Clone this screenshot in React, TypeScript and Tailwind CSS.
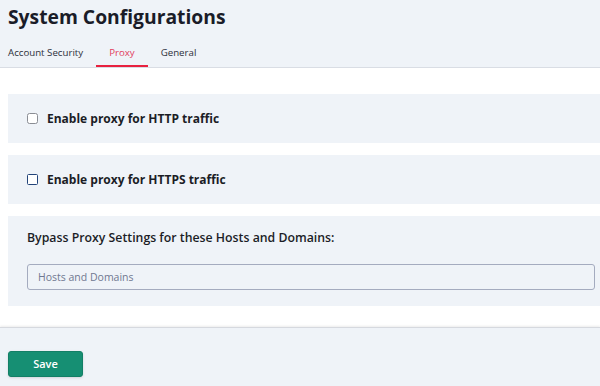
import { useState } from 'react';

const tabs = ['Account Security', 'Proxy', 'General'];

const ProxyCheck = ({ label, accent }: { label: string; accent?: boolean }) => {
  const [checked, setChecked] = useState(false);
  return (
    <div className="flex h-[49px] items-center bg-[#eff3f8] pl-[19px] pr-[5px]">
      <label className="flex cursor-pointer items-center gap-[9px]">
        <input
          type="checkbox"
          checked={checked}
          onChange={() => setChecked(!checked)}
          className={`h-[11px] w-[11px] appearance-none border bg-white ${
            accent ? 'rounded-[1.5px] border-[#23447a]' : 'rounded-[2.5px] border-[#8a8d94]'
          }`}
        />
        <span className="text-[12px] font-bold leading-[18px] text-[#1b1d26]">{label}</span>
      </label>
    </div>
  );
};

export default function App() {
  const [active, setActive] = useState('Proxy');

  return (
    <div className="flex h-[386px] w-[600px] flex-col overflow-hidden bg-white font-['Open_Sans',sans-serif]">
      {/* header */}
      <div className="h-[68px] shrink-0 border-b border-[#d9dde4] bg-[#eff3f8]">
        <h1 className="pl-2 pt-[3px] text-[19.3px] font-bold leading-[27px] text-[#1a1c28]">System Configurations</h1>
        <div className="-ml-[5px] mt-[15px] flex">
          {tabs.map((t) => (
            <button
              key={t}
              onClick={() => setActive(t)}
              className={`border-b-2 px-[13px] pb-[5px] text-[9.7px] leading-[15px] ${
                active === t ? 'border-[#e8213f] text-[#e23b5c]' : 'border-transparent text-[#2c2f3a]'
              }`}
            >
              {t}
            </button>
          ))}
        </div>
      </div>

      {/* content */}
      <div className="flex flex-1 flex-col gap-3 pb-[21px] pl-2 pt-[26px]">
        <ProxyCheck label="Enable proxy for HTTP traffic" />
        <ProxyCheck label="Enable proxy for HTTPS traffic" accent />
        <div className="bg-[#eff3f8] pb-4 pl-[19px] pr-[5px] pt-[13px]">
          <p className="text-[12.3px] font-semibold leading-[18px] text-[#1b1d26]">
            Bypass Proxy Settings for these Hosts and Domains:
          </p>
          <input
            placeholder="Hosts and Domains"
            className="mt-[17px] h-[26px] w-full rounded-[3px] border border-[#a4abbf] bg-[#eff3f8] px-[10px] text-[10.5px] text-[#2c2f3a] outline-none placeholder:text-[#6f7891]"
          />
        </div>
      </div>

      {/* footer */}
      <div className="h-[59px] shrink-0 border-t border-[#d6d9df] bg-[#eff3f8] pl-2 pt-[22px] shadow-[0_-1px_2px_rgba(0,0,0,0.08)]">
        <button className="h-[26px] w-[75px] rounded-[3px] border border-[#137f66] bg-[#168f73] text-[11px] font-semibold text-white shadow-sm">
          Save
        </button>
      </div>
    </div>
  );
}
